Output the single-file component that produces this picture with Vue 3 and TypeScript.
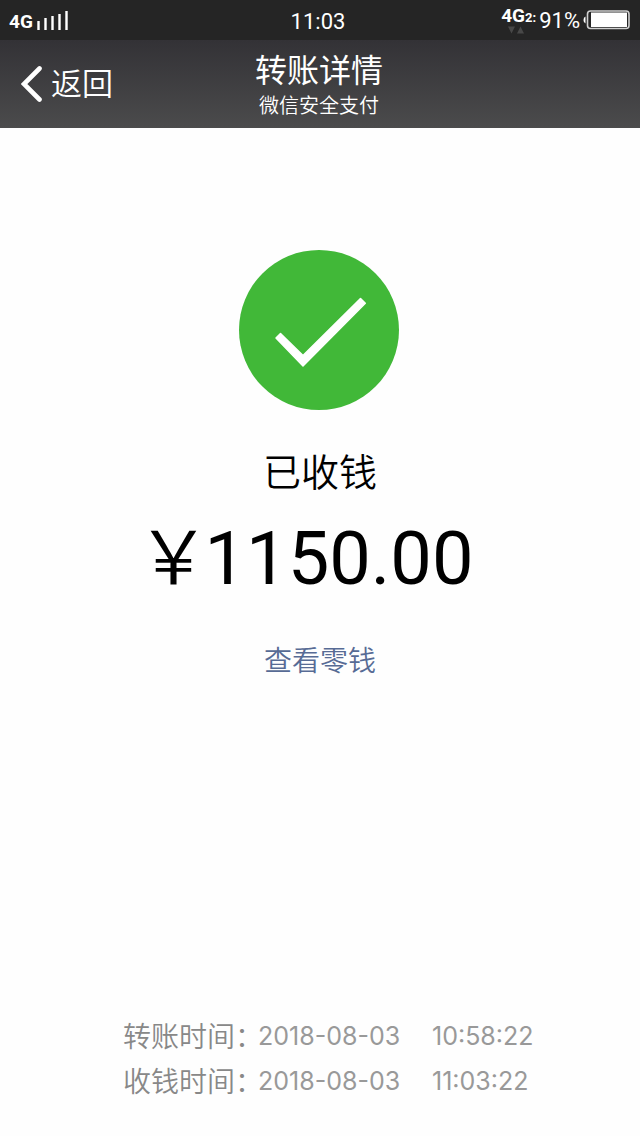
<script setup lang="ts">
interface TimeRow {
  label: string
  date: string
  time: string
}

const amount = '1150.00'
const battery = '91%'
const rows: TimeRow[] = [
  { label: '转账时间：', date: '2018-08-03', time: '10:58:22' },
  { label: '收钱时间：', date: '2018-08-03', time: '11:03:22' },
]
</script>

<template>
  <div class="page">
    <div class="status">
      <div class="status-left">
        <span class="network">4G</span>
        <svg class="signal" width="34" height="22" viewBox="0 0 34 22" aria-hidden="true">
          <path d="M3.500 12v9M10.500 9v12M17.500 7v14M24.500 5v16M31.500 2v19" stroke="#fff" stroke-width="2.400" />
        </svg>
      </div>
      <time class="clock">11:03</time>
      <div class="status-right">
        <div class="data">
          <span class="network">4G<small>2:</small></span>
          <svg width="18" height="8" viewBox="0 0 18 8" aria-hidden="true">
            <path d="M1 0.500h7L4.500 7.500zM10 7.500h7L13.500 0.500z" fill="#484848" />
          </svg>
        </div>
        <span class="percent">{{ battery }}</span>
        <svg class="battery" width="48" height="20" viewBox="0 0 48 20" aria-hidden="true">
          <path d="M2.500 6.500Q0.500 7 0.500 10t2 3.500z" fill="#fff" />
          <rect x="4.500" y="1" width="41.500" height="17.500" rx="3" fill="#252525" stroke="#d0d0d0" stroke-width="1.600" />
          <rect x="8" y="2.500" width="36" height="14.500" fill="#fff" />
        </svg>
      </div>
    </div>

    <header class="nav">
      <button class="back" type="button">
        <svg width="22" height="36" viewBox="0 0 22 36" aria-hidden="true">
          <path d="M18.500 2.500L3 18l15.500 15.500" fill="none" stroke="#fff" stroke-width="4.600" stroke-linecap="round" />
        </svg>
        <span>返回</span>
      </button>
      <div class="heading">
        <h1>转账详情</h1>
        <p>微信安全支付</p>
      </div>
    </header>

    <main class="content">
      <svg class="done" width="160" height="160" viewBox="0 0 160 160" role="img" aria-label="已收钱">
        <circle cx="80" cy="80" r="80" fill="#41b838" />
        <path d="M37 88L41.500 83.500L64 105.500L121.500 48.500L126.300 53.300L64 116Z" fill="#fff" stroke="#fff" stroke-width="1.500" stroke-linejoin="round" />
      </svg>
      <p class="state">已收钱</p>
      <p class="amount"><span class="yen">￥</span><span class="figure">{{ amount }}</span></p>
      <a class="link" href="#">查看零钱</a>
    </main>

    <footer class="times">
      <dl v-for="row in rows" :key="row.label" class="row">
        <dt>{{ row.label }}</dt>
        <dd>{{ row.date }}</dd>
        <dd>{{ row.time }}</dd>
      </dl>
    </footer>
  </div>
</template>

<style>
body {
  background: #fefefe;
}
</style>

<style scoped>
.page {
  display: flex;
  flex-direction: column;
  min-height: 100vh;
  font-family: "Liberation Sans", "Noto Sans CJK SC", sans-serif;
  font-weight: 350;
  color: #000;
}

h1,
p,
dl,
dd {
  margin: 0;
  font-weight: inherit;
}

svg {
  display: block;
  flex: none;
}

.status {
  display: grid;
  grid-template-columns: 1fr auto 1fr;
  align-items: center;
  height: 40px;
  padding: 0 9px;
  background: #252525;
  color: #fff;
}

.status-left,
.status-right {
  display: flex;
  align-items: center;
}

.status-left {
  gap: 2px;
}

.status-right {
  justify-content: flex-end;
}

.network {
  font-family: Roboto, "Liberation Sans", sans-serif;
  font-size: 19px;
  font-weight: 700;
  line-height: 20px;
}

.status-left .network {
  padding-top: 4px;
}

.network small {
  font-size: 13px;
}

.data {
  display: flex;
  flex-direction: column;
  margin-right: 3px;
}

.data svg {
  margin: -2px 0 0 6px;
}

.clock,
.percent {
  font-family: Roboto, "Liberation Sans", sans-serif;
  font-size: 22px;
  font-weight: 400;
  line-height: 24px;
}

.clock {
  padding-top: 4px;
  padding-right: 4px;
}

.percent {
  margin-right: 3px;
  padding-top: 2px;
}

.nav {
  display: grid;
  grid-template-columns: 1fr auto 1fr;
  align-items: center;
  height: 88px;
  padding: 0 21px;
  background: linear-gradient(#333236, #4b4b4c);
  color: #fff;
  box-sizing: border-box;
}

.back {
  display: flex;
  align-items: center;
  justify-self: start;
  gap: 8px;
  padding: 0;
  border: 0;
  background: none;
  color: inherit;
  font: inherit;
  font-size: 31px;
  line-height: 40px;
}

.back span {
  padding-top: 2px;
}

.heading {
  padding-top: 4px;
  padding-right: 2px;
  text-align: center;
}

.heading h1 {
  font-size: 32px;
  font-weight: 400;
  line-height: 40px;
}

.heading p {
  font-size: 20px;
  line-height: 30px;
}

.content {
  display: flex;
  flex: 1;
  flex-direction: column;
  align-items: center;
  padding-top: 122px;
}

.done {
  margin-right: 2px;
}

.state {
  margin-top: 36px;
  font-size: 38px;
  line-height: 54px;
}

.amount {
  display: flex;
  align-items: center;
  margin-top: 15px;
  margin-right: 30px;
  font-size: 74px;
  line-height: 88px;
}

.figure {
  margin-left: -6px;
  font-family: Roboto, "Liberation Sans", sans-serif;
  font-weight: 400;
}

.link {
  margin-top: 39px;
  color: #576b95;
  font-size: 28px;
  line-height: 40px;
  text-decoration: none;
}

.times {
  padding: 0 20px 31px 40px;
  color: #999;
  font-size: 28px;
  line-height: 45px;
}

.row {
  display: grid;
  grid-template-columns: 135px 174px 105px;
  justify-content: center;
  white-space: nowrap;
}

.row dt {
  color: #888;
}

.row dd {
  font-family: Inter, "Liberation Sans", sans-serif;
  font-size: 25px;
  font-weight: 400;
  line-height: 42px;
}
</style>
